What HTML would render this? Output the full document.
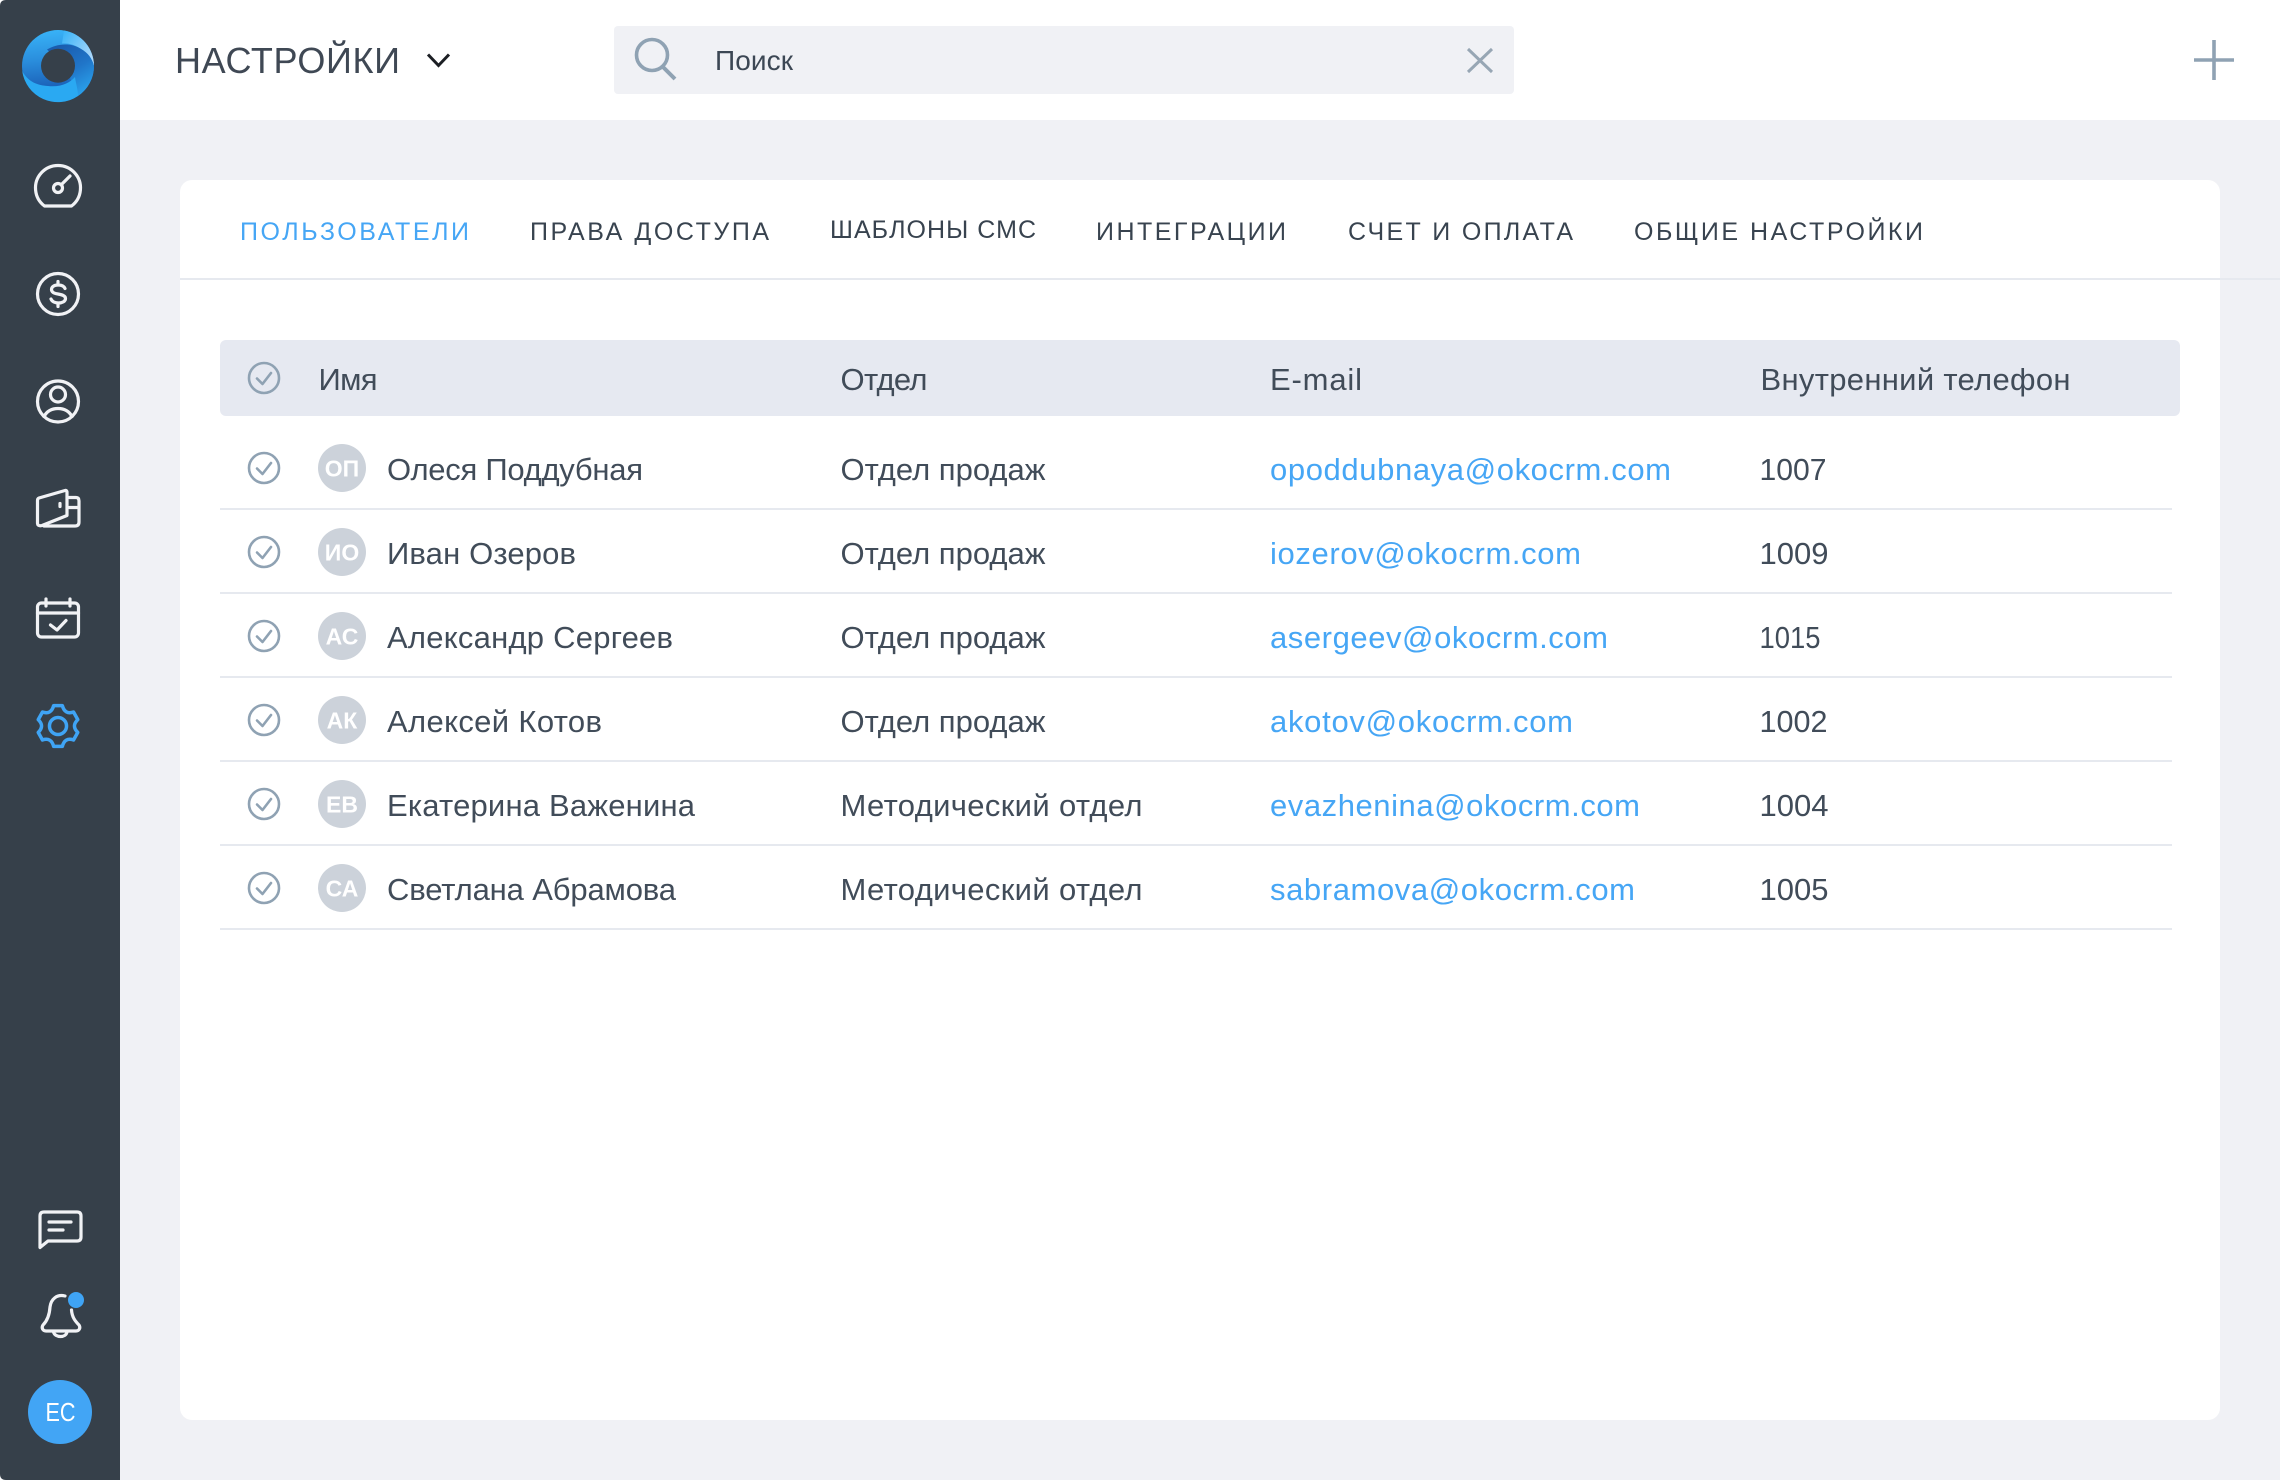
<!DOCTYPE html>
<html lang="ru">
<head>
<meta charset="utf-8">
<title>Настройки</title>
<style>
html,body{margin:0;padding:0;background:#fff;width:2280px;height:1480px;overflow:hidden}
svg{display:block}
text{font-family:"Liberation Sans","Noto Sans CJK SC",sans-serif;white-space:pre}
.t{font-size:31px;fill:#414c59}
.l{font-size:31px;fill:#46a6f5}
.tab{font-size:25px;fill:#38434f}
.av{font-size:23px;font-weight:bold;fill:#fff}
.ic{fill:none;stroke:#f1f2f5;stroke-width:3.2;stroke-linecap:round;stroke-linejoin:round}
.ck{fill:none;stroke:#8fa2b3;stroke-width:2.6;stroke-linecap:round;stroke-linejoin:round}
</style>
</head>
<body>
<svg width="2280" height="1480" viewBox="0 0 2280 1480" xmlns="http://www.w3.org/2000/svg">
<defs>
<linearGradient id="lg1" gradientUnits="userSpaceOnUse" x1="55" y1="30" x2="60" y2="88">
<stop offset="0" stop-color="#38b2f7"/><stop offset=".5" stop-color="#2a8ddc"/><stop offset="1" stop-color="#1a5fb6"/>
</linearGradient>
<linearGradient id="lg2" gradientUnits="userSpaceOnUse" x1="58" y1="46" x2="88" y2="94">
<stop offset="0" stop-color="#1a5cae"/><stop offset=".5" stop-color="#2075c8"/><stop offset="1" stop-color="#2ba6ef"/>
</linearGradient>
<linearGradient id="lg3" gradientUnits="userSpaceOnUse" x1="62" y1="34" x2="92" y2="56">
<stop offset="0" stop-color="#3ab4f8"/><stop offset="1" stop-color="#aad7fa"/>
</linearGradient>
</defs>

<rect x="0" y="0" width="2280" height="1480" fill="#fff"/>
<rect x="120" y="120" width="2160" height="1360" fill="#f0f1f5"/>
<path d="M6 0H120V1480H6Q0 1480 0 1474V6Q0 0 6 0Z" fill="#36404a"/>

<!-- Logo -->
<circle cx="58" cy="66" r="36" fill="url(#lg1)"/>
<path d="M64 30.5A36 36 0 0 1 94 66C92 58 88 53 80.7 48.7C74 44.5 68 43 62 43.5Z" fill="url(#lg3)"/>
<path d="M47 49.5C56 44 70 42 80.7 48.7C88 53 92 58 94 66A36 36 0 0 1 78 96L70 78L58 60Z" fill="url(#lg2)"/>
<path d="M22.2 71C28 82 38 85.5 48 86C60 87.5 70 83 75 77C76 84 78 90 78 96A36 36 0 0 1 22.2 71Z" fill="#2aa9f2"/>
<circle cx="58" cy="65.7" r="17" fill="#36404a"/>

<!-- Gauge -->
<path class="ic" d="M44.5 206A22.5 22.5 0 1 1 71.5 206Z"/>
<circle class="ic" cx="58" cy="188" r="4.5"/>
<path class="ic" d="M61.5 184.5L70 176"/>

<!-- Dollar -->
<circle class="ic" cx="58" cy="294" r="20.5"/>
<path class="ic" d="M65 288.5C64 286 61.5 285 58 285C54 285 51.5 287 51.5 289.5C51.5 292.5 54.5 293.5 58 294C62 294.7 65.5 295.5 65.5 298.5C65.5 301.5 62 303 58.5 303C55 303 52 301.5 51 299M58 281.5V285M58 303V306.5"/>

<!-- User -->
<circle class="ic" cx="58" cy="401.5" r="20.5"/>
<circle class="ic" cx="58" cy="394.5" r="7.5"/>
<path class="ic" d="M44 416.5C47 411 52 408.5 58 408.5C64 408.5 69 411 72 416.5"/>

<!-- Wallet -->
<path class="ic" d="M39 498L65 490.5Q67 490 67 492.5V515.5L42 525.5Q37.5 526.5 37.5 523V500.5Q37.5 498.5 39 498Z"/>
<path class="ic" d="M69 497.5H76Q79 497.5 79 501V522Q79 526 75 526H44M69 507.5H79M60 503.5V506.5"/>

<!-- Calendar -->
<rect class="ic" x="37.5" y="603" width="41" height="34" rx="4"/>
<path class="ic" d="M37.5 613H78.5M46 599V606M70 599V606M50.5 625L57 630L66 620.5"/>

<!-- Gear -->
<g transform="translate(58 726) scale(.97)" fill="none" stroke="#3fa4f5" stroke-width="3.6" stroke-linejoin="round">
<path d="M-4.5 -21L4.5 -21Q7 -11.5 16 -14.4L20.4 -6.6Q13.5 0 20.4 6.6L16 14.4Q7 11.5 4.5 21L-4.5 21Q-7 11.5 -16 14.4L-20.4 6.6Q-13.5 0 -20.4 -6.6L-16 -14.4Q-7 -11.5 -4.5 -21Z"/>
<circle cx="0" cy="0" r="8.8"/>
</g>

<!-- Chat -->
<path class="ic" d="M40 1247.5V1216Q40 1212 44 1212H77Q81 1212 81 1216V1237Q81 1241 77 1241H48Z"/>
<path class="ic" d="M49 1222H71M49 1230H63"/>

<!-- Bell -->
<path class="ic" d="M65 1296C57 1294 51 1299 50 1307C49.5 1315 47 1321 43 1325C41 1328 43 1331 46 1331H76C79 1331 81 1328 79 1325C75 1321 72 1317 71.5 1310"/>
<path class="ic" d="M53.5 1332C55 1338 66 1338 67 1332"/>
<circle cx="76" cy="1300" r="8" fill="#3fa4f5"/>

<!-- User badge -->
<circle cx="60" cy="1412" r="32" fill="#42a5f5"/>
<text x="45.5" y="1421" font-size="26" fill="#fff" textLength="30" lengthAdjust="spacingAndGlyphs">ЕС</text>

<!-- Header -->
<text x="175" y="73" font-size="36" fill="#3f4854" textLength="225">НАСТРОЙКИ</text>
<path d="M428 54.5L438.5 65.5L449 54.5" fill="none" stroke="#1c1f24" stroke-width="3"/>

<rect x="614" y="26" width="900" height="68" rx="4" fill="#f0f1f5"/>
<circle cx="652" cy="55" r="15.5" fill="none" stroke="#8fa2b3" stroke-width="3.6"/>
<path d="M663 67L675 79" fill="none" stroke="#8fa2b3" stroke-width="4"/>
<text x="715" y="70" font-size="28" fill="#3c4754" textLength="78">Поиск</text>
<path d="M1468 49L1492 72M1492 49L1468 72" fill="none" stroke="#97a6b4" stroke-width="3"/>
<path d="M2194 60H2234M2214 40V80" fill="none" stroke="#8fa2b3" stroke-width="3.6"/>

<!-- Card -->
<rect x="180" y="180" width="2040" height="1240" rx="12" fill="#fff"/>
<rect x="180" y="278" width="2100" height="2" fill="#e6e9ef"/>

<!-- Tabs -->
<text class="tab" x="240" y="240" textLength="229" style="fill:#46a6f5">ПОЛЬЗОВАТЕЛИ</text>
<text class="tab" x="530" y="240" textLength="239">ПРАВА ДОСТУПА</text>
<text class="tab" x="830" y="238" textLength="206">ШАБЛОНЫ СМС</text>
<text class="tab" x="1096" y="240" textLength="190">ИНТЕГРАЦИИ</text>
<text class="tab" x="1348" y="240" textLength="225">СЧЕТ И ОПЛАТА</text>
<text class="tab" x="1634" y="240" textLength="289">ОБЩИЕ НАСТРОЙКИ</text>

<!-- Table head -->
<rect x="220" y="340" width="1960" height="76" rx="6" fill="#e6e9f1"/>
<circle class="ck" cx="264" cy="378" r="15"/>
<path class="ck" d="M257 378.5L262.5 384L271 373"/>
<text class="t" x="318.5" y="390" textLength="59">Имя</text>
<text class="t" x="840.5" y="390" textLength="87">Отдел</text>
<text class="t" x="1270" y="390" textLength="92">E-mail</text>
<text class="t" x="1760.5" y="390" textLength="310">Внутренний телефон</text>

<!-- Row 1 -->
<circle class="ck" cx="264" cy="468" r="15"/><path class="ck" d="M257 468.5L262.5 474L271 463"/>
<circle cx="342" cy="468" r="24" fill="#ccd2da"/>
<text class="av" x="342" y="476.5" text-anchor="middle">ОП</text>
<text class="t" x="387" y="480" textLength="256">Олеся Поддубная</text>
<text class="t" x="840.5" y="480" textLength="205">Отдел продаж</text>
<text class="l" x="1270" y="480" textLength="401">opoddubnaya@okocrm.com</text>
<text class="t" x="1759.5" y="480" textLength="67" lengthAdjust="spacingAndGlyphs">1007</text>
<rect x="220" y="508" width="1952" height="2" fill="#e6e9ef"/>

<!-- Row 2 -->
<circle class="ck" cx="264" cy="552" r="15"/><path class="ck" d="M257 552.5L262.5 558L271 547"/>
<circle cx="342" cy="552" r="24" fill="#ccd2da"/>
<text class="av" x="342" y="560.5" text-anchor="middle">ИО</text>
<text class="t" x="387" y="564" textLength="189">Иван Озеров</text>
<text class="t" x="840.5" y="564" textLength="205">Отдел продаж</text>
<text class="l" x="1270" y="564" textLength="311">iozerov@okocrm.com</text>
<text class="t" x="1759.5" y="564" textLength="69" lengthAdjust="spacingAndGlyphs">1009</text>
<rect x="220" y="592" width="1952" height="2" fill="#e6e9ef"/>

<!-- Row 3 -->
<circle class="ck" cx="264" cy="636" r="15"/><path class="ck" d="M257 636.5L262.5 642L271 631"/>
<circle cx="342" cy="636" r="24" fill="#ccd2da"/>
<text class="av" x="342" y="644.5" text-anchor="middle">АС</text>
<text class="t" x="387" y="648" textLength="286">Александр Сергеев</text>
<text class="t" x="840.5" y="648" textLength="205">Отдел продаж</text>
<text class="l" x="1270" y="648" textLength="338">asergeev@okocrm.com</text>
<text class="t" x="1759.5" y="648" textLength="61" lengthAdjust="spacingAndGlyphs">1015</text>
<rect x="220" y="676" width="1952" height="2" fill="#e6e9ef"/>

<!-- Row 4 -->
<circle class="ck" cx="264" cy="720" r="15"/><path class="ck" d="M257 720.5L262.5 726L271 715"/>
<circle cx="342" cy="720" r="24" fill="#ccd2da"/>
<text class="av" x="342" y="728.5" text-anchor="middle">АК</text>
<text class="t" x="387" y="732" textLength="215">Алексей Котов</text>
<text class="t" x="840.5" y="732" textLength="205">Отдел продаж</text>
<text class="l" x="1270" y="732" textLength="303">akotov@okocrm.com</text>
<text class="t" x="1759.5" y="732" textLength="68" lengthAdjust="spacingAndGlyphs">1002</text>
<rect x="220" y="760" width="1952" height="2" fill="#e6e9ef"/>

<!-- Row 5 -->
<circle class="ck" cx="264" cy="804" r="15"/><path class="ck" d="M257 804.5L262.5 810L271 799"/>
<circle cx="342" cy="804" r="24" fill="#ccd2da"/>
<text class="av" x="342" y="812.5" text-anchor="middle">ЕВ</text>
<text class="t" x="387" y="816" textLength="308">Екатерина Важенина</text>
<text class="t" x="840.5" y="816" textLength="302">Методический отдел</text>
<text class="l" x="1270" y="816" textLength="370">evazhenina@okocrm.com</text>
<text class="t" x="1759.5" y="816" textLength="69" lengthAdjust="spacingAndGlyphs">1004</text>
<rect x="220" y="844" width="1952" height="2" fill="#e6e9ef"/>

<!-- Row 6 -->
<circle class="ck" cx="264" cy="888" r="15"/><path class="ck" d="M257 888.5L262.5 894L271 883"/>
<circle cx="342" cy="888" r="24" fill="#ccd2da"/>
<text class="av" x="342" y="896.5" text-anchor="middle">СА</text>
<text class="t" x="387" y="900" textLength="289">Светлана Абрамова</text>
<text class="t" x="840.5" y="900" textLength="302">Методический отдел</text>
<text class="l" x="1270" y="900" textLength="365">sabramova@okocrm.com</text>
<text class="t" x="1759.5" y="900" textLength="69" lengthAdjust="spacingAndGlyphs">1005</text>
<rect x="220" y="928" width="1952" height="2" fill="#e6e9ef"/>
</svg>
</body>
</html>
